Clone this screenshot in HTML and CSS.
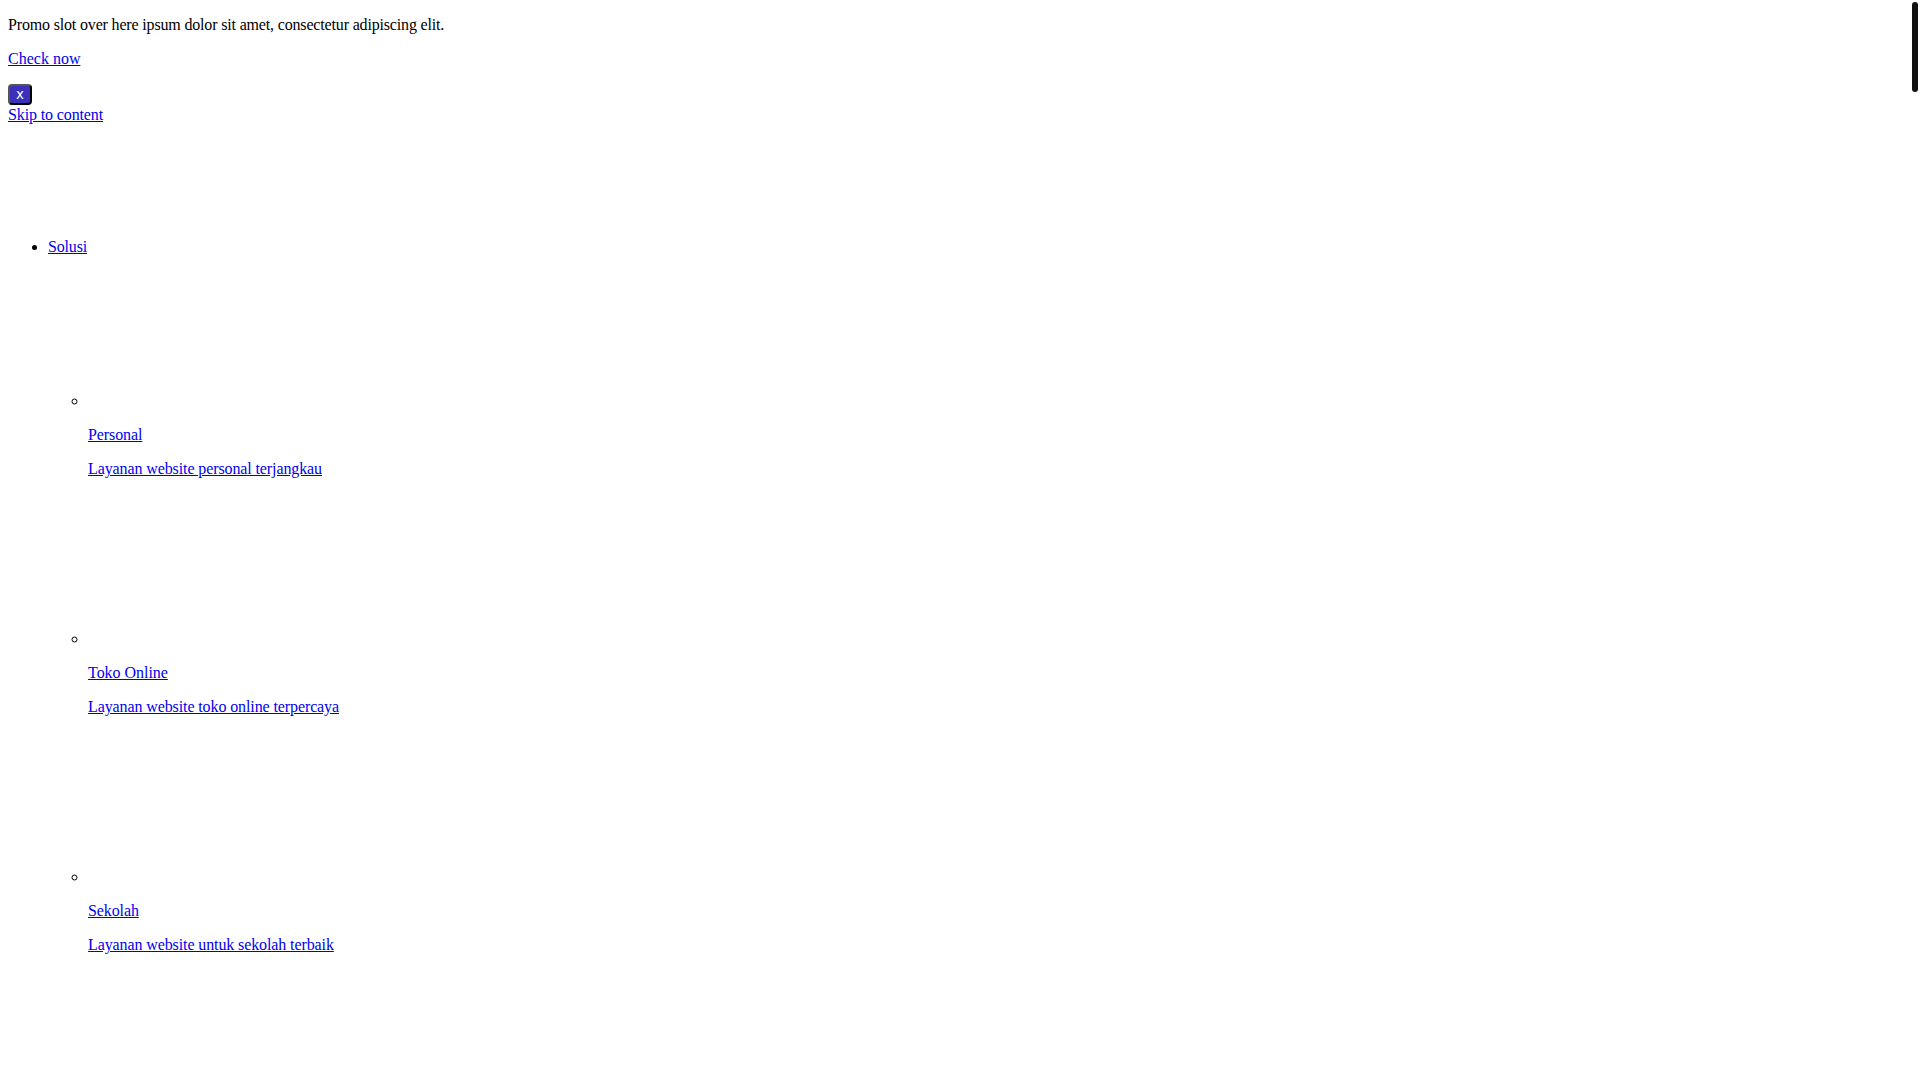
FILE: index.html
```html
<!DOCTYPE html>
<html lang="id">
<head>
<meta charset="utf-8">
<title>Solusi</title>
<link rel="stylesheet" href="styles.css">
</head>
<body>
<div class="page">
  <div class="promo">
    <p class="promo-text">Promo slot over here ipsum dolor sit amet, consectetur adipiscing elit.</p>
    <p><a href="#">Check now</a></p>
    <div class="promo-actions"><button class="promo-close" type="button">x</button></div>
  </div>
  <a class="skip-link" href="#">Skip to content</a>
  <header class="site-header">
    <div class="brand"><a href="#"><span class="logo"></span></a></div>
    <nav class="main-nav">
      <ul>
        <li><a class="menu-link" href="#">Solusi</a>
          <ul class="sub-menu">
            <li>
              <a href="#"><span class="item-icon"></span></a>
              <p><a class="item-title" href="#">Personal</a></p>
              <p><a class="item-desc" href="#">Layanan website personal terjangkau</a></p>
            </li>
            <li>
              <a href="#"><span class="item-icon"></span></a>
              <p><a class="item-title item-title--wide" href="#">Toko Online</a></p>
              <p><a class="item-desc" href="#">Layanan website toko online terpercaya</a></p>
            </li>
            <li>
              <a href="#"><span class="item-icon"></span></a>
              <p><a class="item-title" href="#">Sekolah</a></p>
              <p><a class="item-desc" href="#">Layanan website untuk sekolah terbaik</a></p>
            </li>
          </ul>
        </li>
      </ul>
    </nav>
  </header>
</div>
<div class="scroll-thumb" aria-hidden="true"></div>
</body>
</html>
```
FILE: styles.css
```css
html {
  font-family: "Liberation Serif", "Times New Roman", serif;
  font-size: 16px;
}

body {
  margin: 0;
}

.page {
  margin: 8px;
}

a {
  color: #0000ee;
}

.promo-text {
  letter-spacing: -0.165px;
}

.promo-close {
  font-family: "DejaVu Sans", sans-serif;
  font-size: 13.333px;
  color: #ffffff;
  background-color: #3b30b9;
  border-radius: 4px;
  margin-bottom: 1px;
}

.skip-link {
  letter-spacing: -0.125px;
}

.logo {
  display: inline-block;
  width: 1px;
  height: 94px;
}

.menu-link {
  letter-spacing: -0.17px;
}

.item-icon {
  display: inline-block;
  width: 1px;
  height: 150px;
}

.item-title {
  letter-spacing: -0.1px;
}

.item-title--wide {
  letter-spacing: -0.03px;
}

.item-desc {
  letter-spacing: -0.105px;
}

.scroll-thumb {
  position: fixed;
  top: 2px;
  right: 2px;
  width: 6px;
  height: 90px;
  border-radius: 3px;
  background-color: #111111;
}
```
